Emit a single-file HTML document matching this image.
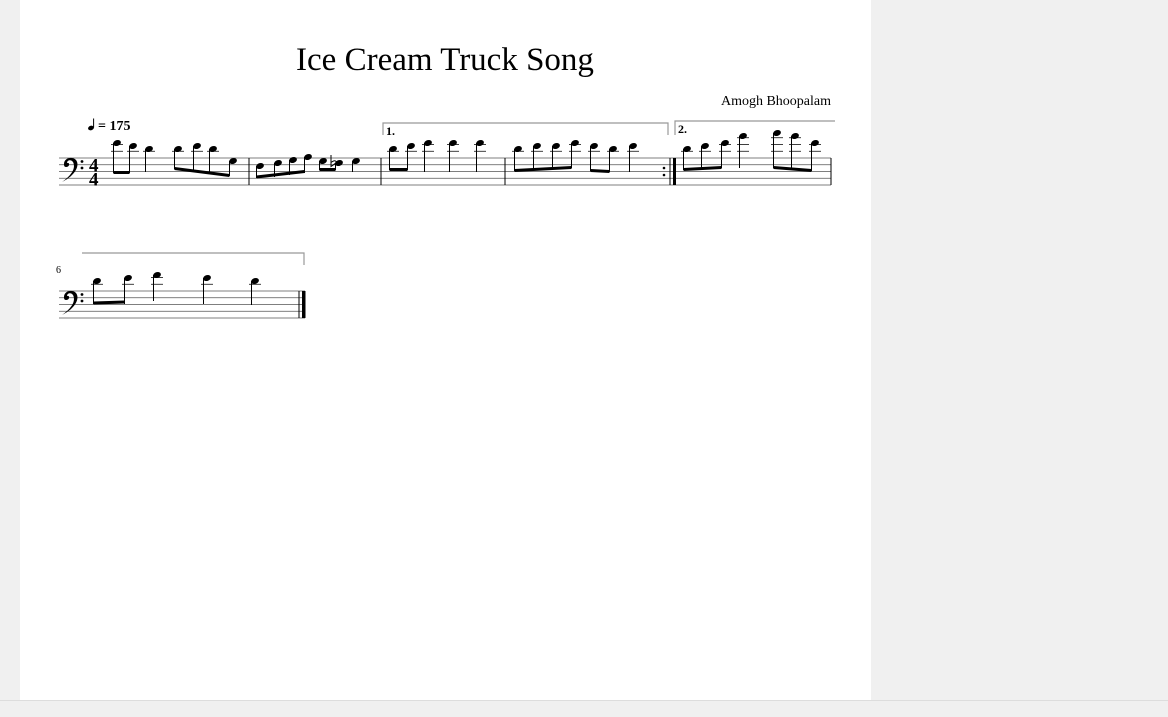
<!DOCTYPE html><html><head><style>
body{margin:0;background:#f0f0f0;width:1168px;height:717px;overflow:hidden;font-family:"Liberation Serif",serif}
.page{position:absolute;left:20px;top:0;width:851px;height:700px;background:#fff}
.bot{position:absolute;left:0;top:700px;width:1168px;height:1px;background:#ddd}
</style></head><body><div class="page"></div><div class="bot"></div>
<svg width="1168" height="717" style="position:absolute;left:0;top:0" font-family="Liberation Serif, serif">
<text x="445" y="70" font-size="33" text-anchor="middle">Ice Cream Truck Song</text>
<text x="831" y="105" font-size="14" text-anchor="end">Amogh Bhoopalam</text>
<ellipse cx="91" cy="128" rx="3" ry="2.2" transform="rotate(-20 91 128)"/><path d="M93.6 127.5V118.5" stroke="#000" stroke-width="1"/>
<text x="98" y="130" font-size="14" font-weight="bold">= 175</text>
<g stroke="#555" stroke-width="0.8">
<line x1="59" x2="831" y1="158" y2="158"/><line x1="59" x2="831" y1="164.75" y2="164.75"/><line x1="59" x2="831" y1="171.5" y2="171.5"/><line x1="59" x2="831" y1="178.25" y2="178.25"/><line x1="59" x2="831" y1="185" y2="185"/>
<line x1="59" x2="305" y1="291" y2="291"/><line x1="59" x2="305" y1="297.75" y2="297.75"/><line x1="59" x2="305" y1="304.5" y2="304.5"/><line x1="59" x2="305" y1="311.25" y2="311.25"/><line x1="59" x2="305" y1="318" y2="318"/>
</g>
<g stroke="#000" stroke-width="1">
<line x1="249" x2="249" y1="158" y2="185"/><line x1="381" x2="381" y1="158" y2="185"/><line x1="505" x2="505" y1="158" y2="185"/><line x1="670" x2="670" y1="158" y2="185"/><line x1="831" x2="831" y1="158" y2="185"/>
<line x1="299" x2="299" y1="291" y2="318"/>
</g>
<rect x="673" y="158" width="3" height="27"/><rect x="302" y="291" width="3.5" height="27"/>
<circle cx="664" cy="168" r="1.3"/><circle cx="664" cy="175" r="1.3"/>
<g stroke="#999" stroke-width="1.2" fill="none">
<polyline points="383,135 383,123 668,123 668,135"/><polyline points="675,135 675,121 835,121"/>
<polyline points="82,253 304,253 304,265"/>
</g>
<text x="386" y="135" font-size="12" font-weight="bold">1.</text>
<text x="678" y="133" font-size="12" font-weight="bold">2.</text>
<text x="56" y="273" font-size="10">6</text>
<g id="clef"><path d="M64,164 C64,158 72,156 76,160 C80,165 76,175 62,182 C72,175 76,168 73,162 C71,159 67,160 67,163 C70,162 70,167 66,167 C64,167 64,165 64,164Z"/><circle cx="82" cy="161.5" r="1.4"/><circle cx="82" cy="168" r="1.4"/></g>
<use href="#clef" y="133"/>
<text x="89" y="171.5" font-size="19" font-weight="bold">4</text><text x="89" y="185.5" font-size="19" font-weight="bold">4</text>
<path d="M331 155V166.5C333 165 337 163 336 161.5C335 160 333 161 331 162.5" stroke="#000" stroke-width="1" fill="none"/>
<g stroke="#000" stroke-width="1">
<g stroke-width="0.8">
<path d="M111 151.25h12M127 151.25h12M143 151.25h12M172 151.25h12M191 151.25h12M207 151.25h12M111 144.5h12M387 151.25h12M405 151.25h12M422 151.25h12M422 144.5h12M447 151.25h12M447 144.5h12M474 151.25h12M474 144.5h12M512 151.25h12M531 151.25h12M550 151.25h12M569 151.25h12M569 144.5h12M588 151.25h12M607 151.25h12M627 151.25h12M681 151.25h12M699 151.25h12M719 151.25h12M719 144.5h12M737 151.25h12M737 144.5h12M737 137.75h12M771 151.25h12M771 144.5h12M771 137.75h12M789 151.25h12M789 144.5h12M789 137.75h12M809 151.25h12M809 144.5h12"/>
<path d="M91 284.25h12M122 284.25h12M151 284.25h12M151 277.5h12M201 284.25h12M249 284.25h12"/>
</g>
<path d="M113.5 143v30M129.5 146v27M145.5 149v23M174.5 149v20M193.5 146v26M209.5 149v25M229.5 161v15M256.5 166v12M274.5 163v14M289.5 160v15M304.5 157v16M319.5 161v9M335.5 163v7M352.5 161v11M389.5 149v21M407.5 146v24M424.5 143v29M449.5 143v29M476.5 143v29M514.5 149v22M533.5 146v24M552.5 146v23M571.5 143v25M590.5 146v25M609.5 149v23M629.5 146v26M683.5 149v21M701.5 146v23M721.5 143v25M739.5 136v32M773.5 133v35M791.5 136v34M811.5 143v28"/>
<path d="M93.5 281v23M124.5 278v26M153.5 275v26M203.5 278v26M251.5 281v24"/>
</g>
<g stroke="#000" stroke-width="3">
<path d="M113.5 172.5L129.5 172.5M174.5 168.5L229.5 175.5M256.5 177L304.5 171.5M319.5 169.5L335.5 169.5M389.5 169.5L407.5 169.5M514.5 170.5L571.5 167.5M590.5 170.5L609.5 171.5M683.5 169.5L721.5 167.5M773.5 167.5L811.5 170.5M93.5 303L124.5 302"/>
</g>
<g>
<ellipse cx="117" cy="143" rx="4" ry="2.9" transform="rotate(-20 117 143)"/><ellipse cx="133" cy="146" rx="4" ry="2.9" transform="rotate(-20 133 146)"/><ellipse cx="149" cy="149" rx="4" ry="2.9" transform="rotate(-20 149 149)"/><ellipse cx="178" cy="149" rx="4" ry="2.9" transform="rotate(-20 178 149)"/><ellipse cx="197" cy="146" rx="4" ry="2.9" transform="rotate(-20 197 146)"/><ellipse cx="213" cy="149" rx="4" ry="2.9" transform="rotate(-20 213 149)"/><ellipse cx="233" cy="161" rx="4" ry="2.9" transform="rotate(-20 233 161)"/>
<ellipse cx="260" cy="166" rx="4" ry="2.9" transform="rotate(-20 260 166)"/><ellipse cx="278" cy="163" rx="4" ry="2.9" transform="rotate(-20 278 163)"/><ellipse cx="293" cy="160" rx="4" ry="2.9" transform="rotate(-20 293 160)"/><ellipse cx="308" cy="157" rx="4" ry="2.9" transform="rotate(-20 308 157)"/><ellipse cx="323" cy="161" rx="4" ry="2.9" transform="rotate(-20 323 161)"/><ellipse cx="339" cy="163" rx="4" ry="2.9" transform="rotate(-20 339 163)"/><ellipse cx="356" cy="161" rx="4" ry="2.9" transform="rotate(-20 356 161)"/>
<ellipse cx="393" cy="149" rx="4" ry="2.9" transform="rotate(-20 393 149)"/><ellipse cx="411" cy="146" rx="4" ry="2.9" transform="rotate(-20 411 146)"/><ellipse cx="428" cy="143" rx="4" ry="2.9" transform="rotate(-20 428 143)"/><ellipse cx="453" cy="143" rx="4" ry="2.9" transform="rotate(-20 453 143)"/><ellipse cx="480" cy="143" rx="4" ry="2.9" transform="rotate(-20 480 143)"/>
<ellipse cx="518" cy="149" rx="4" ry="2.9" transform="rotate(-20 518 149)"/><ellipse cx="537" cy="146" rx="4" ry="2.9" transform="rotate(-20 537 146)"/><ellipse cx="556" cy="146" rx="4" ry="2.9" transform="rotate(-20 556 146)"/><ellipse cx="575" cy="143" rx="4" ry="2.9" transform="rotate(-20 575 143)"/><ellipse cx="594" cy="146" rx="4" ry="2.9" transform="rotate(-20 594 146)"/><ellipse cx="613" cy="149" rx="4" ry="2.9" transform="rotate(-20 613 149)"/><ellipse cx="633" cy="146" rx="4" ry="2.9" transform="rotate(-20 633 146)"/>
<ellipse cx="687" cy="149" rx="4" ry="2.9" transform="rotate(-20 687 149)"/><ellipse cx="705" cy="146" rx="4" ry="2.9" transform="rotate(-20 705 146)"/><ellipse cx="725" cy="143" rx="4" ry="2.9" transform="rotate(-20 725 143)"/><ellipse cx="743" cy="136" rx="4" ry="2.9" transform="rotate(-20 743 136)"/><ellipse cx="777" cy="133" rx="4" ry="2.9" transform="rotate(-20 777 133)"/><ellipse cx="795" cy="136" rx="4" ry="2.9" transform="rotate(-20 795 136)"/><ellipse cx="815" cy="143" rx="4" ry="2.9" transform="rotate(-20 815 143)"/>
<ellipse cx="97" cy="281" rx="4" ry="2.9" transform="rotate(-20 97 281)"/><ellipse cx="128" cy="278" rx="4" ry="2.9" transform="rotate(-20 128 278)"/><ellipse cx="157" cy="275" rx="4" ry="2.9" transform="rotate(-20 157 275)"/><ellipse cx="207" cy="278" rx="4" ry="2.9" transform="rotate(-20 207 278)"/><ellipse cx="255" cy="281" rx="4" ry="2.9" transform="rotate(-20 255 281)"/>
</g>
</svg></body></html>
